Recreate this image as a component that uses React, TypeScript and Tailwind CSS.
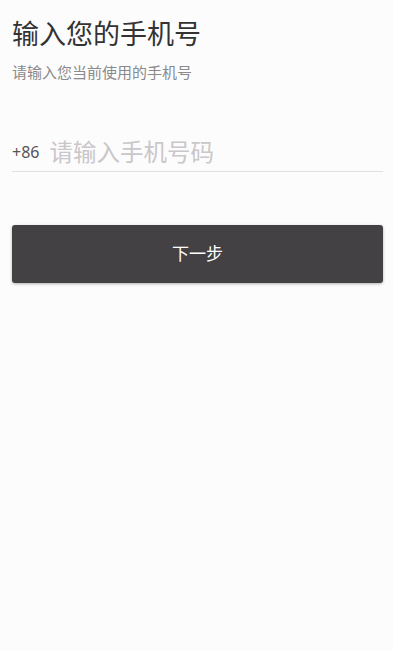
import React from "react";

export default function App() {
  return (
    <div
      className="min-h-[650px] w-full bg-[#fdfcfd] pl-3 pr-[10px] pt-[17px]"
      style={{ fontFamily: '"Noto Sans", "Noto Sans CJK SC", sans-serif' }}
    >
      <h1 className="text-[27px] leading-[34px] text-[#333333]">输入您的手机号</h1>
      <p className="mt-[11px] text-[15px] leading-[20px] text-[#8a8a8a]">请输入您当前使用的手机号</p>

      <div className="mt-[55px] flex items-center border-b border-[#e2e0e2] pb-[4px]">
        <span className="text-[16px] leading-[30px] text-[#555555]">+86</span>
        <input
          className="ml-[10px] flex-1 bg-transparent text-[23.5px] leading-[30px] text-[#333333] outline-none placeholder:text-[#c9c7c9]"
          placeholder="请输入手机号码"
        />
      </div>

      <button className="mt-[53px] flex h-[58px] w-full items-center justify-center rounded-[3px] bg-[#434143] text-[17px] text-white shadow-[0_1px_3px_rgba(0,0,0,0.3)]">
        下一步
      </button>
    </div>
  );
}
